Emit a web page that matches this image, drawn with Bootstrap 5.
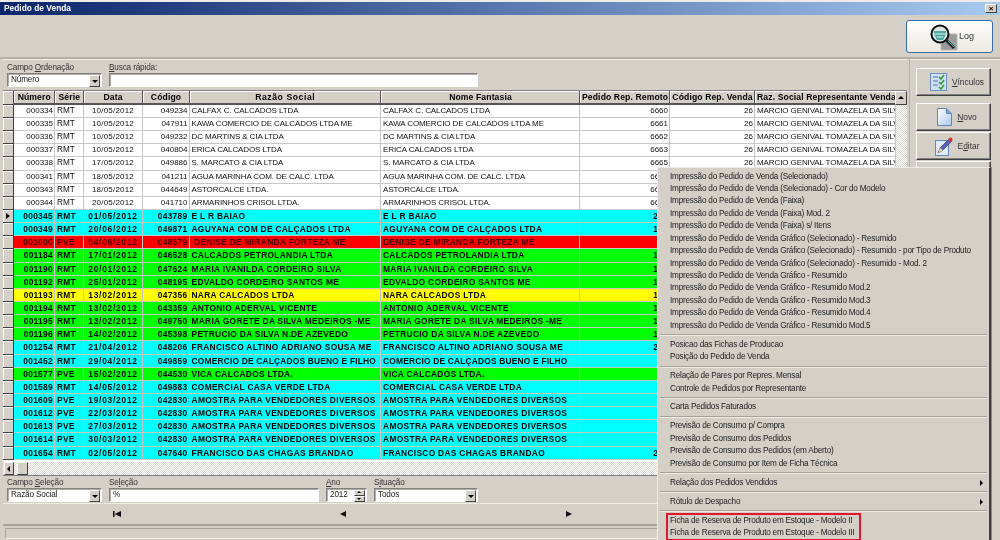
<!DOCTYPE html>
<html lang="pt-BR"><head><meta charset="utf-8"><title>Pedido de Venda</title>
<link href="https://cdn.jsdelivr.net/npm/bootstrap@5.3.0/dist/css/bootstrap.min.css" rel="stylesheet">
<style>
html,body{margin:0;height:540px;overflow:hidden;background:#d4d0c8}
body{font:8.2px/1 "Liberation Sans",sans-serif;color:#333}
.app{width:1000px;height:540px;overflow:hidden;position:relative;background:#d4d0c8;border-top:2px solid #eeece6;filter:blur(.2px)}
.titlebar{height:13px;background:linear-gradient(90deg,#0a246a,#a6caf0);color:#fff;font-weight:700;font-size:8.4px;line-height:13px;padding-left:4px}
.closebtn{width:12px;height:9px;background:#d4d0c8;border:1px solid;border-color:#fff #404040 #404040 #fff;margin-right:3px;color:#000;font-size:8px;line-height:7px;text-align:center}
.toolbar{height:44px;border-bottom:2px solid #b4b0a8;padding:5px 7px 0 0}
.logbtn{width:87px;height:33px;background:linear-gradient(#fff,#ece9e0);border:1px solid #3c6ca8;border-radius:3px;font-size:9px;color:#333;padding:0 1px 0 2px;gap:0}
.leftpane{width:907px;padding-left:3px;flex:none}
.filterbar{height:31px;padding:3px 0 0 4px;gap:7px;border-top:1px solid #eeece6}
.fieldlabel{font-size:8.2px;letter-spacing:-.15px;line-height:9px;height:10px;color:#333;display:block;white-space:nowrap}
.fakebox{height:14px;background:#fff;border:1px solid;border-color:#808080 #fff #fff #808080;box-shadow:inset 1px 1px 0 #b0aca4;font-size:8.2px;letter-spacing:-.15px;line-height:12px;padding-left:3px;color:#222;border-radius:0;min-height:0}
.w-campo{width:95px}.w-busca{width:369px}.w-sel{width:210px}.w-ano{width:41px}.w-sit{width:104px}
.ddbtn{position:absolute;right:1px;top:1px;width:11px;height:12px;background:#d4d0c8;border:1px solid;border-color:#fff #404040 #404040 #fff}
.ddbtn::after{content:"";position:absolute;left:2px;top:4px;border:3px solid transparent;border-top:3px solid #000;border-bottom:0}
.spinup,.spindn{position:absolute;right:1px;width:11px;height:6px;background:#d4d0c8;border:1px solid;border-color:#fff #404040 #404040 #fff}
.spinup{top:1px}.spindn{top:7px}
.spinup::after,.spindn::after{content:"";position:absolute;left:2px;top:0;border:2.5px solid transparent}
.spinup::after{border-bottom-color:#000;border-top:0}.spindn::after{border-top-color:#000;border-bottom:0;top:1px}
.gridbox{height:385px;border-top:1px solid #808080;background:#fff}
.gridscroll{width:892px;flex:none;position:relative}
.table.erp{table-layout:fixed;width:892px;margin:0;border-collapse:collapse;font-size:8px;--bs-table-bg:#fff}
.erp th,.erp td{height:13.15px;line-height:12px;padding:0 1px 0 2px!important;border:0!important;border-right:1px solid #c4c4c4!important;border-bottom:1px solid #c8c8c8!important;white-space:nowrap;overflow:hidden;color:#111;box-sizing:border-box;letter-spacing:-.1px}
.erp thead th{height:13px;background:#d4d0c8;color:#000;text-align:center;font-size:8.6px;letter-spacing:.12px;border-right:1px solid #555!important;border-bottom:2px solid #555!important;box-shadow:inset 1px 1px 0 #fff!important}
.erp thead th.spread{letter-spacing:.6px}
.erp td.ind,.erp th.ind{background:#d4d0c8;border-right:1px solid #404040!important;border-bottom:1px solid #404040!important;box-shadow:inset 1px 1px 0 #fff!important;padding:0!important;position:relative}
.erp td.num{text-align:right;font-size:8px;letter-spacing:0}
.erp td.ctr{text-align:center;font-size:8px;letter-spacing:.2px}
.erp td:nth-child(3){font-size:8.2px;letter-spacing:0}
.erp tr.hl td:not(.ind){font-weight:700;color:#000;font-size:8.4px;letter-spacing:.3px}
.erp tr.hl td.ctr{letter-spacing:.75px}
.erp tr.amo td:nth-child(6),.erp tr.amo td:nth-child(7){letter-spacing:.33px}
.erp tr.snug td:nth-child(6),.erp tr.snug td:nth-child(7){letter-spacing:.2px}
.erp tr.cy{--bs-table-bg:#0ff}.erp tr.gr{--bs-table-bg:#0f0}.erp tr.ye{--bs-table-bg:#ff0}.erp tr.re{--bs-table-bg:#f00}
.erp tr.re td:not(.ind){color:#400}
.curarrow{position:absolute;left:3px;top:3px;border:3.5px solid transparent;border-left:4px solid #000;border-right:0}
.vscroll{width:12px;background:repeating-conic-gradient(#fff 0 25%,#dcd9d2 0 50%) 0 0/2px 2px}
.vscroll .arrowbtn{height:14px;width:12px;display:block}
.arrowbtn{background:#d4d0c8;border:1px solid;border-color:#fff #404040 #404040 #fff;position:relative;flex:none}
.upglyph{position:absolute;left:2px;top:4px;border:3px solid transparent;border-bottom:3px solid #000;border-top:0}
.hscroll{height:13px;margin-top:2px;width:904px;background:repeating-conic-gradient(#fff 0 25%,#dcd9d2 0 50%) 0 0/2px 2px;padding-left:1px;gap:3px}
.hscroll .arrowbtn{width:10px;height:13px}
.hscroll .thumbbar{width:11px;height:13px}
.leftglyph{position:absolute;left:2px;top:3px;border:3px solid transparent;border-right:3px solid #000;border-left:0}
.selbar{height:28px;padding:2px 0 0 4px;gap:7px;border-top:1px solid #808080;margin-top:0}
.navrow{height:21px;padding:0;border-top:1px solid #eeece6}
.navglyph{width:8px;height:6px;flex:none;display:block}
.n1{margin-left:110px}.n2{margin-left:218px}.n3{margin-left:218px}
.statusline{height:14px;border-top:2px solid #a8a49c;margin-top:0;padding-top:2px}
.statusline div{height:11px;border:1px solid;border-color:#a8a49c #eeece6 #eeece6 #a8a49c;margin-left:2px}
.rightpane{flex:1;padding:8px 0 0 6px;border-left:1px solid #b4b0a8;margin-left:2px;border-top:1px solid #eeece6}
.sidebtn{width:75px;background:#d4d0c8;border:1px solid;border-color:#fff #404040 #404040 #fff;border-radius:0;font-size:8.4px;color:#333;padding:0 0 0 7px;box-shadow:inset -1px -1px 0 #808080;gap:5px}
.sh28{height:28px;margin-bottom:7px}.sh27{height:28px;margin-bottom:1px}
.menupop.dropdown-menu{position:absolute;left:657px;top:165px;width:334px;height:380px;display:block;margin:0;padding:2.5px 0 0;background:#d4d0c8;border:0;border-left:1px solid #eeece6;border-top:1px solid #eeece6;border-right:2px solid #404040;border-radius:0;min-width:0;box-shadow:1px 0 0 #888}
.menupop .dropdown-item{height:12.45px;line-height:12.45px;padding:0 0 0 12px;font-size:8.2px;letter-spacing:-.22px;color:#222;position:relative;white-space:nowrap;background:none}
.menupop .dropdown-divider{margin:2.25px 2px;height:2px;border-top:1px solid #a5a29a;border-bottom:1px solid #eeece6;opacity:1;box-sizing:border-box}
.subarrow{position:absolute;right:6px;top:3px;border:3px solid transparent;border-left:3px solid #000;border-right:0}
.redbox{width:195px;height:28.5px;margin-left:8px;margin-top:-2px;border:2px solid #e3182d}
.menupop .redbox .dropdown-item{padding-left:2px}
.c0{width:10px}.c1{width:41.5px}.c2{width:28.5px}.c3{width:59px}.c4{width:47px}.c5{width:191.5px}.c6{width:199px}.c7{width:90px}.c8{width:85px}.c9{width:140.5px}
</style></head><body>
<div class="app d-flex flex-column">
 <div class="titlebar d-flex justify-content-between align-items-center"><span>Pedido de Venda</span><span class="closebtn">×</span></div>
 <div class="toolbar d-flex justify-content-end">
  <button class="logbtn btn d-flex align-items-center justify-content-center" type="button">
   <svg width="33" height="32" viewBox="0 0 33 32"><rect x="15" y="13" width="16" height="16" fill="#9a9a9a"/><path d="M15 13h16v16h-16z" fill="none" stroke="#b8b8b8"/><circle cx="14" cy="13" r="8.5" fill="#dfe6e6" stroke="#111" stroke-width="2"/><path d="M8 10h12v3l-3 6h-6l-3-6z" fill="#4aa8a0"/><path d="M8 13h12M11 16h6" stroke="#e0f0f0"/><path d="M20 19l8 8" stroke="#222" stroke-width="3"/><path d="M22 20l6 6" stroke="#3bb0b0" stroke-width="1"/></svg>
   <span>Log</span></button>
 </div>
 <div class="d-flex flex-grow-1">
  <div class="leftpane d-flex flex-column">
   <div class="filterbar d-flex">
    <div class="w-campo"><span class="fieldlabel">Campo <u>O</u>rdenação</span><div class="fakebox position-relative mt-0">Número<span class="ddbtn"></span></div></div>
    <div class="w-busca"><span class="fieldlabel"><u>B</u>usca rápida:</span><div class="fakebox"></div></div>
   </div>
   <div class="gridbox d-flex flex-column">
    <div class="d-flex flex-grow-0">
    <div class="gridscroll">
    <table class="table erp">
     <colgroup><col class="c0"><col class="c1"><col class="c2"><col class="c3"><col class="c4"><col class="c5"><col class="c6"><col class="c7"><col class="c8"><col class="c9"></colgroup>
     <thead><tr><th class="ind"></th><th>Número</th><th>Série</th><th>Data</th><th>Código</th><th class="spread">Razão Social</th><th>Nome Fantasia</th><th>Pedido Rep. Remoto</th><th>Código Rep. Venda</th><th>Raz. Social Representante Venda</th></tr></thead>
     <tbody>
<tr><td class="ind"></td><td class="num">000334</td><td>RMT</td><td class="ctr">10/05/2012</td><td class="num">049234</td><td>CALFAX C. CALCADOS LTDA</td><td>CALFAX C. CALCADOS LTDA</td><td class="num">6660</td><td class="num">26</td><td>MARCIO GENIVAL TOMAZELA DA SILVA</td></tr>
<tr><td class="ind"></td><td class="num">000335</td><td>RMT</td><td class="ctr">10/05/2012</td><td class="num">047911</td><td>KAWA COMERCIO DE CALCADOS LTDA ME</td><td>KAWA COMERCIO DE CALCADOS LTDA ME</td><td class="num">6661</td><td class="num">26</td><td>MARCIO GENIVAL TOMAZELA DA SILVA</td></tr>
<tr><td class="ind"></td><td class="num">000336</td><td>RMT</td><td class="ctr">10/05/2012</td><td class="num">049232</td><td>DC MARTINS &amp; CIA LTDA</td><td>DC MARTINS &amp; CIA LTDA</td><td class="num">6662</td><td class="num">26</td><td>MARCIO GENIVAL TOMAZELA DA SILVA</td></tr>
<tr><td class="ind"></td><td class="num">000337</td><td>RMT</td><td class="ctr">10/05/2012</td><td class="num">040804</td><td>ERICA CALCADOS LTDA</td><td>ERICA CALCADOS LTDA</td><td class="num">6663</td><td class="num">26</td><td>MARCIO GENIVAL TOMAZELA DA SILVA</td></tr>
<tr><td class="ind"></td><td class="num">000338</td><td>RMT</td><td class="ctr">17/05/2012</td><td class="num">049886</td><td>S. MARCATO &amp; CIA LTDA</td><td>S. MARCATO &amp; CIA LTDA</td><td class="num">6665</td><td class="num">26</td><td>MARCIO GENIVAL TOMAZELA DA SILVA</td></tr>
<tr><td class="ind"></td><td class="num">000341</td><td>RMT</td><td class="ctr">18/05/2012</td><td class="num">041211</td><td>AGUA MARINHA COM. DE CALC. LTDA</td><td>AGUA MARINHA COM. DE CALC. LTDA</td><td class="num">6667</td><td></td><td></td></tr>
<tr><td class="ind"></td><td class="num">000343</td><td>RMT</td><td class="ctr">18/05/2012</td><td class="num">044649</td><td>ASTORCALCE LTDA.</td><td>ASTORCALCE LTDA.</td><td class="num">6668</td><td></td><td></td></tr>
<tr><td class="ind"></td><td class="num">000344</td><td>RMT</td><td class="ctr">20/05/2012</td><td class="num">041710</td><td>ARMARINHOS CRISOL LTDA.</td><td>ARMARINHOS CRISOL LTDA.</td><td class="num">6669</td><td></td><td></td></tr>
<tr class="hl cy"><td class="ind"><span class="curarrow"></span></td><td class="num">000345</td><td>RMT</td><td class="ctr">01/05/2012</td><td class="num">043789</td><td>E L R BAIAO</td><td>E L R BAIAO</td><td class="num">270</td><td></td><td></td></tr>
<tr class="hl cy"><td class="ind"></td><td class="num">000349</td><td>RMT</td><td class="ctr">20/06/2012</td><td class="num">049871</td><td>AGUYANA COM DE CALÇADOS LTDA</td><td>AGUYANA COM DE CALÇADOS LTDA</td><td class="num">120</td><td></td><td></td></tr>
<tr class="hl re"><td class="ind"></td><td class="num">001000</td><td>PVE</td><td class="ctr">04/06/2012</td><td class="num">048679</td><td>&nbsp;DENISE DE MIRANDA FORTEZA ME</td><td>DENISE DE MIRANDA FORTEZA ME</td><td></td><td></td><td></td></tr>
<tr class="hl gr"><td class="ind"></td><td class="num">001184</td><td>RMT</td><td class="ctr">17/01/2012</td><td class="num">046528</td><td>CALCADOS PETROLANDIA LTDA</td><td>CALCADOS PETROLANDIA LTDA</td><td class="num">120</td><td></td><td></td></tr>
<tr class="hl gr"><td class="ind"></td><td class="num">001190</td><td>RMT</td><td class="ctr">20/01/2012</td><td class="num">047624</td><td>MARIA IVANILDA CORDEIRO SILVA</td><td>MARIA IVANILDA CORDEIRO SILVA</td><td class="num">120</td><td></td><td></td></tr>
<tr class="hl gr"><td class="ind"></td><td class="num">001192</td><td>RMT</td><td class="ctr">25/01/2012</td><td class="num">048195</td><td>EDVALDO CORDEIRO SANTOS ME</td><td>EDVALDO CORDEIRO SANTOS ME</td><td class="num">120</td><td></td><td></td></tr>
<tr class="hl ye"><td class="ind"></td><td class="num">001193</td><td>RMT</td><td class="ctr">13/02/2012</td><td class="num">047356</td><td>NARA CALCADOS LTDA</td><td>NARA CALCADOS LTDA</td><td class="num">120</td><td></td><td></td></tr>
<tr class="hl gr"><td class="ind"></td><td class="num">001194</td><td>RMT</td><td class="ctr">13/02/2012</td><td class="num">043359</td><td>ANTONIO ADERVAL VICENTE</td><td>ANTONIO ADERVAL VICENTE</td><td class="num">120</td><td></td><td></td></tr>
<tr class="hl gr"><td class="ind"></td><td class="num">001195</td><td>RMT</td><td class="ctr">13/02/2012</td><td class="num">049750</td><td>MARIA GORETE DA SILVA MEDEIROS -ME</td><td>MARIA GORETE DA SILVA MEDEIROS -ME</td><td class="num">120</td><td></td><td></td></tr>
<tr class="hl gr"><td class="ind"></td><td class="num">001196</td><td>RMT</td><td class="ctr">14/02/2012</td><td class="num">045398</td><td>PETRUCIO DA SILVA N.DE AZEVEDO</td><td>PETRUCIO DA SILVA N.DE AZEVEDO</td><td class="num">120</td><td></td><td></td></tr>
<tr class="hl cy"><td class="ind"></td><td class="num">001254</td><td>RMT</td><td class="ctr">21/04/2012</td><td class="num">048206</td><td>FRANCISCO ALTINO ADRIANO SOUSA ME</td><td>FRANCISCO ALTINO ADRIANO SOUSA ME</td><td class="num">270</td><td></td><td></td></tr>
<tr class="hl cy snug"><td class="ind"></td><td class="num">001452</td><td>RMT</td><td class="ctr">29/04/2012</td><td class="num">049859</td><td>COMERCIO DE CALÇADOS BUENO E FILHO</td><td>COMERCIO DE CALÇADOS BUENO E FILHO</td><td></td><td></td><td></td></tr>
<tr class="hl gr"><td class="ind"></td><td class="num">001577</td><td>PVE</td><td class="ctr">15/02/2012</td><td class="num">044530</td><td>VICA CALCADOS LTDA.</td><td>VICA CALCADOS LTDA.</td><td></td><td></td><td></td></tr>
<tr class="hl cy"><td class="ind"></td><td class="num">001589</td><td>RMT</td><td class="ctr">14/05/2012</td><td class="num">049883</td><td>COMERCIAL CASA VERDE LTDA</td><td>COMERCIAL CASA VERDE LTDA</td><td></td><td></td><td></td></tr>
<tr class="hl cy amo"><td class="ind"></td><td class="num">001609</td><td>PVE</td><td class="ctr">19/03/2012</td><td class="num">042830</td><td>AMOSTRA PARA VENDEDORES DIVERSOS</td><td>AMOSTRA PARA VENDEDORES DIVERSOS</td><td></td><td></td><td></td></tr>
<tr class="hl cy amo"><td class="ind"></td><td class="num">001612</td><td>PVE</td><td class="ctr">22/03/2012</td><td class="num">042830</td><td>AMOSTRA PARA VENDEDORES DIVERSOS</td><td>AMOSTRA PARA VENDEDORES DIVERSOS</td><td></td><td></td><td></td></tr>
<tr class="hl cy amo"><td class="ind"></td><td class="num">001613</td><td>PVE</td><td class="ctr">27/03/2012</td><td class="num">042830</td><td>AMOSTRA PARA VENDEDORES DIVERSOS</td><td>AMOSTRA PARA VENDEDORES DIVERSOS</td><td></td><td></td><td></td></tr>
<tr class="hl cy amo"><td class="ind"></td><td class="num">001614</td><td>PVE</td><td class="ctr">30/03/2012</td><td class="num">042830</td><td>AMOSTRA PARA VENDEDORES DIVERSOS</td><td>AMOSTRA PARA VENDEDORES DIVERSOS</td><td></td><td></td><td></td></tr>
<tr class="hl cy"><td class="ind"></td><td class="num">001654</td><td>RMT</td><td class="ctr">02/05/2012</td><td class="num">047640</td><td>FRANCISCO DAS CHAGAS BRANDAO</td><td>FRANCISCO DAS CHAGAS BRANDAO</td><td class="num">270</td><td></td><td></td></tr>
     </tbody>
    </table>
    </div>
    <div class="vscroll"><div class="arrowbtn"><span class="upglyph"></span></div></div>
    </div>
    <div class="hscroll d-flex"><div class="arrowbtn"><span class="leftglyph"></span></div><div class="arrowbtn thumbbar"></div></div>
   </div>
   <div class="selbar d-flex">
    <div class="w-campo"><span class="fieldlabel">Campo <u>S</u>eleção</span><div class="fakebox position-relative">Razão Social<span class="ddbtn"></span></div></div>
    <div class="w-sel"><span class="fieldlabel">Se<u>l</u>eção</span><div class="fakebox">%</div></div>
    <div class="w-ano"><span class="fieldlabel"><u>A</u>no</span><div class="fakebox position-relative">2012<span class="spinup"></span><span class="spindn"></span></div></div>
    <div class="w-sit"><span class="fieldlabel">S<u>i</u>tuação</span><div class="fakebox position-relative">Todos<span class="ddbtn"></span></div></div>
   </div>
   <div class="navrow d-flex align-items-center">
    <svg class="navglyph n1" viewBox="0 0 8 6"><path d="M0 0h1.5v6H0zM1.5 3L8 0v6z" fill="#111"/></svg>
    <svg class="navglyph n2" viewBox="0 0 8 6"><path d="M1 3L7 0v6z" fill="#111"/></svg>
    <svg class="navglyph n3" viewBox="0 0 8 6"><path d="M7 3L1 0v6z" fill="#111"/></svg>
   </div>
   <div class="statusline"><div></div></div>
  </div>
  <div class="rightpane">
   <button type="button" class="btn sidebtn sh28 d-flex align-items-center justify-content-center"><svg width="17" height="18" viewBox="0 0 17 18"><rect x=".5" y=".5" width="16" height="17" fill="#cfe0f5" stroke="#6f8fc0"/><path d="M3 4h5M3 8h5M3 12h5" stroke="#4a70b0"/><path d="M9 4l2 2 3-4M9 9l2 2 3-4M9 14l2 2 3-4" fill="none" stroke="#2e9a2e" stroke-width="1.5"/></svg><span><u>V</u>ínculos</span></button>
   <button type="button" class="btn sidebtn sh27 d-flex align-items-center justify-content-center"><svg width="15" height="18" viewBox="0 0 15 18"><defs><linearGradient id="pg" x1="0" y1="0" x2="1" y2="1"><stop offset="0" stop-color="#fff"/><stop offset="1" stop-color="#a8c8ee"/></linearGradient></defs><path d="M.5.5h9l5 5v12h-14z" fill="url(#pg)" stroke="#5f86bd"/><path d="M9.5.5v5h5" fill="#7fa6dc" stroke="#5f86bd"/></svg><span><u>N</u>ovo</span></button>
   <button type="button" class="btn sidebtn sh27 d-flex align-items-center justify-content-center"><svg width="18" height="19" viewBox="0 0 18 19"><rect x=".5" y="3.5" width="13" height="15" fill="#dfeafa" stroke="#5f86bd"/><path d="M3 16l2-5 9-9 3 2-9 9z" fill="#5a62c0" stroke="#333" stroke-width=".6"/><circle cx="15.5" cy="2.5" r="2" fill="#e03020"/><path d="M3 16l2-5 3 2z" fill="#e8d0a0"/></svg><span>E<u>d</u>itar</span></button>
   <button type="button" class="btn sidebtn sh27" aria-label="Imprimir"></button>
   <button type="button" class="btn sidebtn sh27" aria-label="Excluir"></button>
   <button type="button" class="btn sidebtn sh27" aria-label="Copiar"></button>
   <button type="button" class="btn sidebtn sh27" aria-label="Sair"></button>
  </div>
 </div>
 <div class="dropdown-menu menupop show">
  <a class="dropdown-item" href="#">Impressão do Pedido de Venda (Selecionado)</a>
  <a class="dropdown-item" href="#">Impressão do Pedido de Venda (Selecionado) - Cor do Modelo</a>
  <a class="dropdown-item" href="#">Impressão do Pedido de Venda (Faixa)</a>
  <a class="dropdown-item" href="#">Impressão do Pedido de Venda (Faixa) Mod. 2</a>
  <a class="dropdown-item" href="#">Impressão do Pedido de Venda (Faixa) s/ Itens</a>
  <a class="dropdown-item" href="#">Impressão do Pedido de Venda Gráfico (Selecionado) - Resumido</a>
  <a class="dropdown-item" href="#">Impressão do Pedido de Venda Gráfico (Selecionado) - Resumido - por Tipo de Produto</a>
  <a class="dropdown-item" href="#">Impressão do Pedido de Venda Gráfico (Selecionado) - Resumido - Mod. 2</a>
  <a class="dropdown-item" href="#">Impressão do Pedido de Venda Gráfico - Resumido</a>
  <a class="dropdown-item" href="#">Impressão do Pedido de Venda Gráfico - Resumido Mod.2</a>
  <a class="dropdown-item" href="#">Impressão do Pedido de Venda Gráfico - Resumido Mod.3</a>
  <a class="dropdown-item" href="#">Impressão do Pedido de Venda Gráfico - Resumido Mod.4</a>
  <a class="dropdown-item" href="#">Impressão do Pedido de Venda Gráfico - Resumido Mod.5</a>
  <hr class="dropdown-divider">
  <a class="dropdown-item" href="#">Posicao das Fichas de Producao</a>
  <a class="dropdown-item" href="#">Posição do Pedido de Venda</a>
  <hr class="dropdown-divider">
  <a class="dropdown-item" href="#">Relação de Pares por Repres. Mensal</a>
  <a class="dropdown-item" href="#">Controle de Pedidos por Representante</a>
  <hr class="dropdown-divider">
  <a class="dropdown-item" href="#">Carta Pedidos Faturados</a>
  <hr class="dropdown-divider">
  <a class="dropdown-item" href="#">Previsão de Consumo p/ Compra</a>
  <a class="dropdown-item" href="#">Previsão de Consumo dos Pedidos</a>
  <a class="dropdown-item" href="#">Previsão de Consumo dos Pedidos (em Aberto)</a>
  <a class="dropdown-item" href="#">Previsão de Consumo por Item de Ficha Técnica</a>
  <hr class="dropdown-divider">
  <a class="dropdown-item" href="#">Relação dos Pedidos Vendidos<span class="subarrow"></span></a>
  <hr class="dropdown-divider">
  <a class="dropdown-item" href="#">Rótulo de Despacho<span class="subarrow"></span></a>
  <hr class="dropdown-divider">
  <div class="redbox">
   <a class="dropdown-item" href="#">Ficha de Reserva de Produto em Estoque - Modelo II</a>
   <a class="dropdown-item" href="#">Ficha de Reserva de Produto em Estoque - Modelo III</a>
  </div>
 </div>
</div>
<script src="https://cdn.jsdelivr.net/npm/bootstrap@5.3.0/dist/js/bootstrap.bundle.min.js"></script>
</body></html>
